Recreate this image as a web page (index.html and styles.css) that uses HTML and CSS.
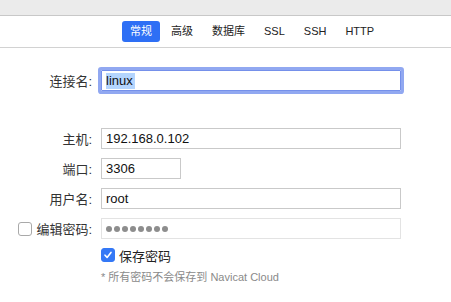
FILE: index.html
```html
<html>

<head>
  <meta charset="utf8">
  <title>连接设置</title>
  <link rel="stylesheet" href="styles.css">
</head>

<body>
  <div class="titlebar"></div>
  <div class="tabs">
    <div class="tab active">常规</div>
    <div class="tab">高级</div>
    <div class="tab">数据库</div>
    <div class="tab">SSL</div>
    <div class="tab">SSH</div>
    <div class="tab">HTTP</div>
  </div>
  <section class="form">
    <div class="row">
      <div class="label">连接名:</div>
      <div class="field wide focused"><span class="sel">linux</span></div>
    </div>
    <div class="row spaced">
      <div class="label">主机:</div>
      <div class="field wide">192.168.0.102</div>
    </div>
    <div class="row">
      <div class="label">端口:</div>
      <div class="field short">3306</div>
    </div>
    <div class="row">
      <div class="label">用户名:</div>
      <div class="field wide">root</div>
    </div>
    <div class="row">
      <div class="label"><span class="check"></span>编辑密码:</div>
      <div class="field wide disabled">
        <span class="dot"></span><span class="dot"></span><span class="dot"></span><span class="dot"></span><span class="dot"></span><span class="dot"></span><span class="dot"></span><span class="dot"></span>
      </div>
    </div>
    <div class="save">
      <span class="check checked">
        <svg width="10" height="10" viewBox="0 0 10 10"><path d="M2 5.2 L4.1 7.4 L8 2.4" fill="none" stroke="#fff" stroke-width="1.6" stroke-linecap="round" stroke-linejoin="round"/></svg>
      </span>
      保存密码
    </div>
    <div class="note">* 所有密码不会保存到 Navicat Cloud</div>
  </section>
</body>

</html>
```

FILE: styles.css
```css
* {
  margin: 0;
  padding: 0;
  box-sizing: border-box;
}

body {
  font-family: "Liberation Sans", "Noto Sans CJK SC", sans-serif;
  font-size: 13px;
  color: #2b2b2b;
  background: #fff;
  width: 451px;
  height: 302px;
  overflow: hidden;
}

.titlebar {
  height: 16px;
  background: #ebebeb;
  border-bottom: 1px solid #c8c8c8;
}

.tabs {
  display: flex;
  align-items: center;
  height: 32px;
  padding-left: 122px;
  gap: 3px;
  border-bottom: 1px solid #d2d2d2;
}

.tab {
  height: 21px;
  line-height: 21px;
  padding: 0 8px;
  font-size: 11px;
  color: #222;
  border-radius: 3px;
}

.tab.active {
  background: #2e6ff5;
  color: #fff;
}

.form {
  padding-top: 22px;
}

.row {
  display: flex;
  align-items: center;
  height: 21px;
  margin-bottom: 9px;
}

.row.spaced {
  margin-top: 37px;
}

.label {
  width: 92px;
  margin-right: 9px;
  text-align: right;
  color: #333;
  display: flex;
  align-items: center;
  justify-content: flex-end;
}

.field {
  height: 21px;
  border: 1px solid #c9c9c9;
  padding-left: 4px;
  line-height: 19px;
  color: #111;
  display: flex;
  align-items: center;
}

.field.wide {
  width: 300px;
}

.field.short {
  width: 80px;
}

.field.focused {
  border-color: #7590ea;
  border-radius: 1px;
  box-shadow: 0 0 0 3px #91a8f1;
}

.field.disabled {
  border-color: #e3e3e3;
}

.sel {
  background: #b4d5fe;
  padding-right: 2px;
  line-height: 16px;
}

.dot {
  width: 6px;
  height: 6px;
  border-radius: 50%;
  background: #8d8d8d;
  margin-right: 2px;
}

.check {
  width: 14px;
  height: 14px;
  border: 1px solid #a9a9a9;
  border-radius: 3px;
  background: #fff;
  margin-right: 4px;
  display: inline-flex;
  align-items: center;
  justify-content: center;
}

.row .check {
  margin-right: auto;
  margin-left: 18px;
}

.check.checked {
  background: #3478f6;
  border-color: #3478f6;
}

.save {
  display: flex;
  align-items: center;
  height: 20px;
  margin-top: -3px;
  padding-left: 101px;
  color: #222;
}

.note {
  margin-top: 3px;
  padding-left: 101px;
  font-size: 11px;
  color: #8a8a8a;
}
```
